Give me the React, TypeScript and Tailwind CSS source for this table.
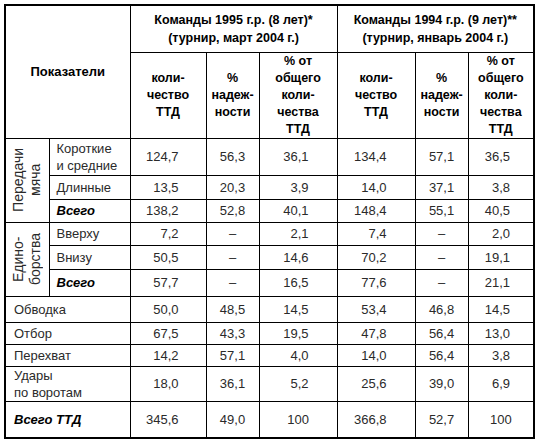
const font = { fontFamily: '"Liberation Sans", Arial, sans-serif' }

type Row = {
  label: string[]
  bold?: boolean
  vals: string[]
  h: number
}

const passes: Row[] = [
  { label: ['Короткие', 'и средние'], vals: ['124,7', '56,3', '36,1', '134,4', '57,1', '36,5'], h: 37 },
  { label: ['Длинные'], vals: ['13,5', '20,3', '3,9', '14,0', '37,1', '3,8'], h: 24 },
  { label: ['Всего'], bold: true, vals: ['138,2', '52,8', '40,1', '148,4', '55,1', '40,5'], h: 23 },
]

const duels: Row[] = [
  { label: ['Вверху'], vals: ['7,2', '–', '2,1', '7,4', '–', '2,0'], h: 23 },
  { label: ['Внизу'], vals: ['50,5', '–', '14,6', '70,2', '–', '19,1'], h: 24 },
  { label: ['Всего'], bold: true, vals: ['57,7', '–', '16,5', '77,6', '–', '21,1'], h: 27 },
]

const rest: Row[] = [
  { label: ['Обводка'], vals: ['50,0', '48,5', '14,5', '53,4', '46,8', '14,5'], h: 26 },
  { label: ['Отбор'], vals: ['67,5', '43,3', '19,5', '47,8', '56,4', '13,0'], h: 22 },
  { label: ['Перехват'], vals: ['14,2', '57,1', '4,0', '14,0', '56,4', '3,8'], h: 22 },
  { label: ['Удары', 'по воротам'], vals: ['18,0', '36,1', '5,2', '25,6', '39,0', '6,9'], h: 32 },
  { label: ['Всего ТТД'], bold: true, vals: ['345,6', '49,0', '100', '366,8', '52,7', '100'], h: 37 },
]

// right padding per data column, numbers line up on the comma
const padClass = ['pr-[27px]', '', 'pr-[28px]', 'pr-[28px]', '', 'pr-[23px]']

function Values({ vals }: { vals: string[] }) {
  return (
    <>
      {vals.map((v, i) => {
        const centered = v === '–' || v === '100' || padClass[i] === ''
        return (
          <td
            key={i}
            className={`border border-black p-0 ${centered ? 'text-center' : `text-right ${padClass[i]}`}`}
          >
            {v}
          </td>
        )
      })}
    </>
  )
}

function Label({ row, span }: { row: Row; span: boolean }) {
  return (
    <td
      colSpan={span ? 2 : 1}
      className={`border border-black p-0 ${span ? 'pl-[8px]' : 'pl-[7px]'} text-left leading-[17px] ${
        row.bold ? 'font-bold italic text-black' : ''
      }`}
    >
      {row.label.map((l) => (
        <div key={l}>{l}</div>
      ))}
    </td>
  )
}

function Group({ title, rows }: { title: string[]; rows: Row[] }) {
  return (
    <>
      {rows.map((r, i) => (
        <tr key={i} style={{ height: r.h }}>
          {i === 0 && (
            <td rowSpan={rows.length} className="border border-black p-0">
              <div className="flex justify-center">
                <div className="rotate-180 text-center text-[14px] leading-[17px] [writing-mode:vertical-rl]">
                  {title[0]}
                  <br />
                  {title[1]}
                </div>
              </div>
            </td>
          )}
          <Label row={r} span={false} />
          <Values vals={r.vals} />
        </tr>
      ))}
    </>
  )
}

function SubHead({ lines }: { lines: string[] }) {
  return (
    <th className="border border-black p-0 text-center">
      {lines.map((l, i) => (
        <div key={i}>{l}</div>
      ))}
    </th>
  )
}

export default function App() {
  return (
    <div className="min-h-[439px] w-[536px] bg-white pl-[4px] pt-[4px]" style={font}>
      <table className="w-[529px] table-fixed border-collapse border-2 border-black text-[13px] leading-[17px] text-[#2a2a2a]">
        <colgroup>
          <col className="w-[44px]" />
          <col className="w-[81px]" />
          <col className="w-[76px]" />
          <col className="w-[53px]" />
          <col className="w-[78px]" />
          <col className="w-[78px]" />
          <col className="w-[53px]" />
          <col className="w-[66px]" />
        </colgroup>
        <thead className="text-[12.5px] leading-[17px] font-bold text-black">
          <tr className="h-[47px]">
            <th colSpan={2} rowSpan={2} className="border border-black p-0 text-center align-middle text-[13px]">
              Показатели
            </th>
            <th colSpan={3} className="border border-black p-0 text-center leading-[18px]">
              Команды 1995 г.р. (8 лет)*
              <br />
              (турнир, март 2004 г.)
            </th>
            <th colSpan={3} className="border border-black p-0 text-center leading-[18px]">
              Команды 1994 г.р. (9 лет)**
              <br />
              (турнир, январь 2004 г.)
            </th>
          </tr>
          <tr className="h-[86px]">
            <SubHead lines={['коли-', 'чество', 'ТТД']} />
            <SubHead lines={['%', 'надеж-', 'ности']} />
            <SubHead lines={['% от', 'общего', 'коли-', 'чества', 'ТТД']} />
            <SubHead lines={['коли-', 'чество', 'ТТД']} />
            <SubHead lines={['%', 'надеж-', 'ности']} />
            <SubHead lines={['% от', 'общего', 'коли-', 'чества', 'ТТД']} />
          </tr>
        </thead>
        <tbody>
          <Group title={['Передачи', 'мяча']} rows={passes} />
          <Group title={['Едино-', 'борства']} rows={duels} />
          {rest.map((r, i) => (
            <tr key={i} style={{ height: r.h }}>
              <Label row={r} span />
              <Values vals={r.vals} />
            </tr>
          ))}
        </tbody>
      </table>
    </div>
  )
}
